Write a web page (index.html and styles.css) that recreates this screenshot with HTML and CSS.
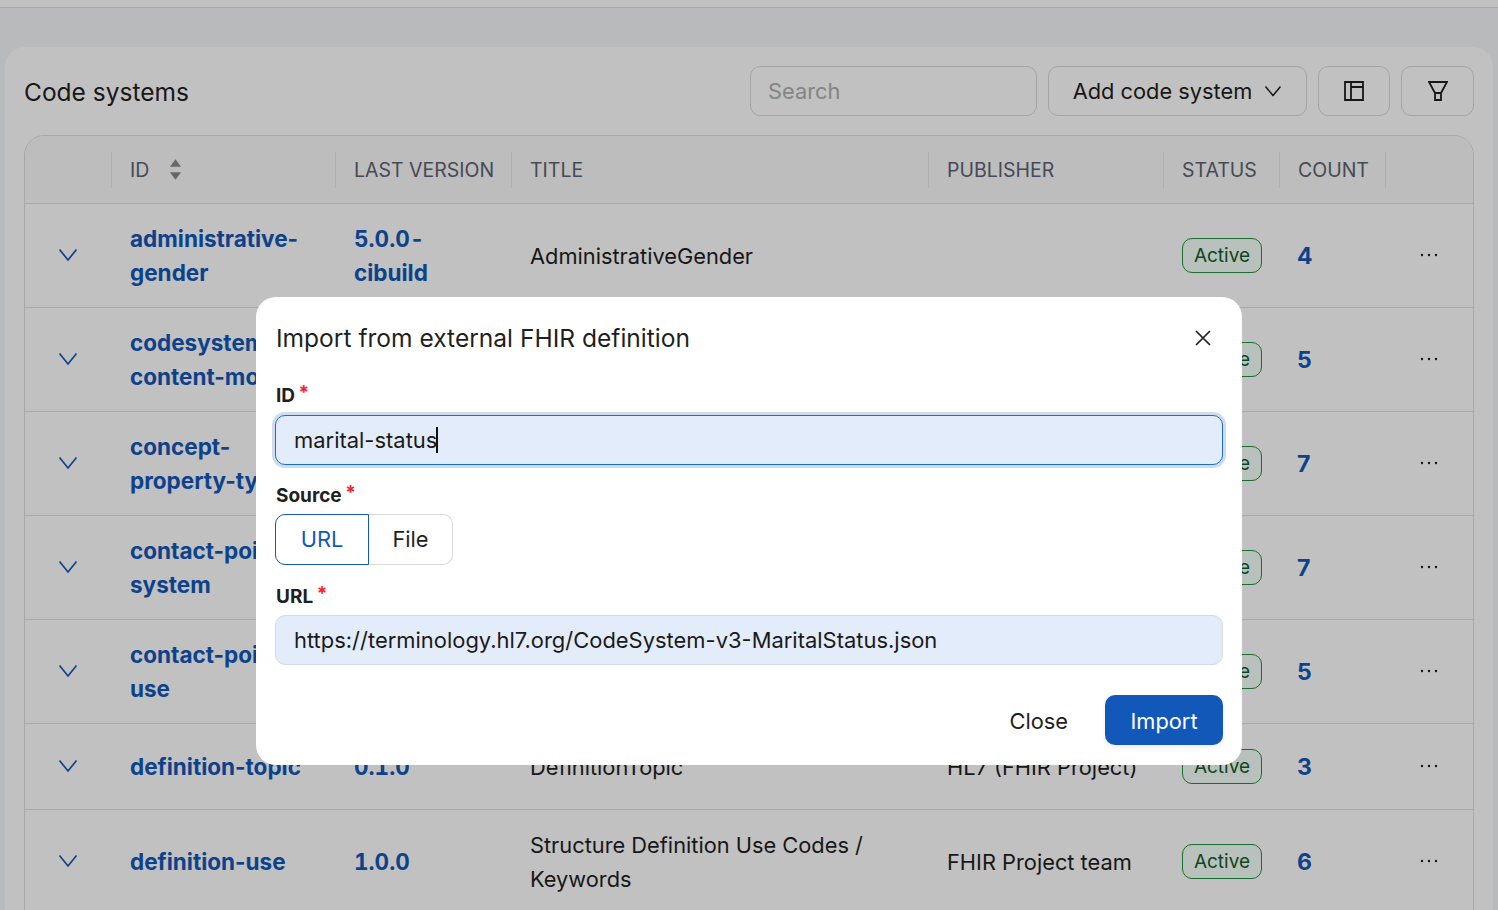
FILE: index.html
```html
<!DOCTYPE html>
<html lang="en">
<head>
    <meta charset="UTF-8">
    <meta name="viewport" content="width=device-width, initial-scale=1.0">
    <title>Code systems</title>
    <link rel="stylesheet" href="styles.css">
</head>
<body>
    <header class="topbar"></header>
    <main class="card">
        <div class="card-head">
            <h2 class="card-title">Code systems</h2>
            <div class="tools">
                <div class="search">Search</div>
                <button class="btn btn-add">Add code system
                    <svg class="ico-chev" viewBox="0 0 18 12"><path d="M1.500 1.500 9 10.500l7.500-9"/></svg>
                </button>
                <button class="btn btn-icon">
                    <svg class="ico" viewBox="0 0 20 20"><path d="M1 1h18v18H1zM7 1v18M7 6h12"/></svg>
                </button>
                <button class="btn btn-icon btn-filter">
                    <svg class="ico" viewBox="0 0 20 20"><path d="M1 1h18l-6 11H7zM7 12h6v7H7z"/></svg>
                </button>
            </div>
        </div>
        <div class="table-wrap">
            <table class="grid">
                <colgroup>
                    <col class="c-exp"><col class="c-id"><col class="c-ver"><col class="c-title"><col class="c-pub"><col class="c-status"><col class="c-count"><col class="c-act">
                </colgroup>
                <thead>
                    <tr>
                        <th></th>
                        <th><div class="th">ID
                            <svg class="ico-sort" viewBox="0 0 14 22"><path d="M7 0l6 8H1zM7 22l-6-8h12z"/></svg>
                        </div></th>
                        <th><div class="th">LAST VERSION</div></th>
                        <th><div class="th">TITLE</div></th>
                        <th><div class="th">PUBLISHER</div></th>
                        <th><div class="th">STATUS</div></th>
                        <th><div class="th">COUNT</div></th>
                        <th><div class="th"></div></th>
                    </tr>
                </thead>
                <tbody>
                    <tr>
                        <td class="exp"><svg class="ico-exp" viewBox="0 0 20 14"><path d="M1.500 1.500 10 12l8.500-10.500"/></svg></td>
                        <td><a class="lnk">administrative-gender</a></td>
                        <td><a class="lnk ver">5.0.0-cibuild</a></td>
                        <td>AdministrativeGender</td>
                        <td></td>
                        <td><span class="tag">Active</span></td>
                        <td><a class="lnk num">4</a></td>
                        <td class="act"><svg class="ico-dots" viewBox="0 0 18 4"><circle cx="2" cy="2" r="1.200"/><circle cx="9" cy="2" r="1.200"/><circle cx="16" cy="2" r="1.200"/></svg></td>
                    </tr>
                    <tr>
                        <td class="exp"><svg class="ico-exp" viewBox="0 0 20 14"><path d="M1.500 1.500 10 12l8.500-10.500"/></svg></td>
                        <td><a class="lnk">codesystem-content-mode</a></td>
                        <td><a class="lnk ver">5.0.0</a></td>
                        <td>CodeSystemContentMode</td>
                        <td>HL7 (FHIR Project)</td>
                        <td><span class="tag">Active</span></td>
                        <td><a class="lnk num">5</a></td>
                        <td class="act"><svg class="ico-dots" viewBox="0 0 18 4"><circle cx="2" cy="2" r="1.200"/><circle cx="9" cy="2" r="1.200"/><circle cx="16" cy="2" r="1.200"/></svg></td>
                    </tr>
                    <tr>
                        <td class="exp"><svg class="ico-exp" viewBox="0 0 20 14"><path d="M1.500 1.500 10 12l8.500-10.500"/></svg></td>
                        <td><a class="lnk">concept-property-type</a></td>
                        <td><a class="lnk ver">5.0.0</a></td>
                        <td>PropertyType</td>
                        <td>HL7 (FHIR Project)</td>
                        <td><span class="tag">Active</span></td>
                        <td><a class="lnk num">7</a></td>
                        <td class="act"><svg class="ico-dots" viewBox="0 0 18 4"><circle cx="2" cy="2" r="1.200"/><circle cx="9" cy="2" r="1.200"/><circle cx="16" cy="2" r="1.200"/></svg></td>
                    </tr>
                    <tr>
                        <td class="exp"><svg class="ico-exp" viewBox="0 0 20 14"><path d="M1.500 1.500 10 12l8.500-10.500"/></svg></td>
                        <td><a class="lnk">contact-point-system</a></td>
                        <td><a class="lnk ver">5.0.0</a></td>
                        <td>ContactPointSystem</td>
                        <td>HL7 (FHIR Project)</td>
                        <td><span class="tag">Active</span></td>
                        <td><a class="lnk num">7</a></td>
                        <td class="act"><svg class="ico-dots" viewBox="0 0 18 4"><circle cx="2" cy="2" r="1.200"/><circle cx="9" cy="2" r="1.200"/><circle cx="16" cy="2" r="1.200"/></svg></td>
                    </tr>
                    <tr>
                        <td class="exp"><svg class="ico-exp" viewBox="0 0 20 14"><path d="M1.500 1.500 10 12l8.500-10.500"/></svg></td>
                        <td><a class="lnk">contact-point-use</a></td>
                        <td><a class="lnk ver">5.0.0</a></td>
                        <td>ContactPointUse</td>
                        <td>HL7 (FHIR Project)</td>
                        <td><span class="tag">Active</span></td>
                        <td><a class="lnk num">5</a></td>
                        <td class="act"><svg class="ico-dots" viewBox="0 0 18 4"><circle cx="2" cy="2" r="1.200"/><circle cx="9" cy="2" r="1.200"/><circle cx="16" cy="2" r="1.200"/></svg></td>
                    </tr>
                    <tr class="row-short">
                        <td class="exp"><svg class="ico-exp" viewBox="0 0 20 14"><path d="M1.500 1.500 10 12l8.500-10.500"/></svg></td>
                        <td><a class="lnk">definition-topic</a></td>
                        <td><a class="lnk ver">0.1.0</a></td>
                        <td>DefinitionTopic</td>
                        <td>HL7 (FHIR Project)</td>
                        <td><span class="tag">Active</span></td>
                        <td><a class="lnk num">3</a></td>
                        <td class="act"><svg class="ico-dots" viewBox="0 0 18 4"><circle cx="2" cy="2" r="1.200"/><circle cx="9" cy="2" r="1.200"/><circle cx="16" cy="2" r="1.200"/></svg></td>
                    </tr>
                    <tr>
                        <td class="exp"><svg class="ico-exp" viewBox="0 0 20 14"><path d="M1.500 1.500 10 12l8.500-10.500"/></svg></td>
                        <td><a class="lnk">definition-use</a></td>
                        <td><a class="lnk ver">1.0.0</a></td>
                        <td>Structure Definition Use Codes / Keywords</td>
                        <td>FHIR Project team</td>
                        <td><span class="tag">Active</span></td>
                        <td><a class="lnk num">6</a></td>
                        <td class="act"><svg class="ico-dots" viewBox="0 0 18 4"><circle cx="2" cy="2" r="1.200"/><circle cx="9" cy="2" r="1.200"/><circle cx="16" cy="2" r="1.200"/></svg></td>
                    </tr>
                </tbody>
            </table>
        </div>
    </main>

    <div class="overlay"></div>
    <section class="modal">
        <div class="modal-head">
            <h3 class="modal-title">Import from external FHIR definition</h3>
            <svg class="ico-close" viewBox="0 0 16 16"><path d="M1 1l14 14M15 1 1 15"/></svg>
        </div>
        <label class="lbl">ID <span class="req">*</span></label>
        <div class="field field-focus">marital-status<span class="caret"></span></div>
        <label class="lbl lbl-gap">Source <span class="req">*</span></label>
        <div class="segs">
            <div class="seg seg-on">URL</div>
            <div class="seg">File</div>
        </div>
        <label class="lbl lbl-gap lbl-url">URL <span class="req">*</span></label>
        <div class="field">https://terminology.hl7.org/CodeSystem-v3-MaritalStatus.json</div>
        <div class="modal-foot">
            <button class="btn-text">Close</button>
            <button class="btn-main">Import</button>
        </div>
    </section>
</body>
</html>
```

FILE: styles.css
```css
* {
    box-sizing: border-box;
}
html, body {
    height: 100%;
}
body {
    margin: 0;
    overflow: hidden;
    background: #f5f6f8;
    color: #1f1f1f;
    font-family: Inter, "Noto Sans", sans-serif;
    font-size: 21.800px;
}
.topbar {
    height: 8px;
    background: #fff;
    border-bottom: 1px solid #dcdcdf;
}
.card {
    margin: 39px 5px 0 5px;
    padding: 19px 19px 0;
    background: #fff;
    border-radius: 20px 20px 0 0;
    height: 900px;
}
.card-head {
    display: flex;
    justify-content: space-between;
    align-items: center;
    margin-bottom: 19px;
}
.card-title {
    margin: 2px 0 0;
    font-size: 24.500px;
    font-weight: 400;
}
.tools {
    display: flex;
    gap: 11px;
}
.search {
    width: 287px;
    height: 50px;
    padding: 0 17px;
    display: flex;
    align-items: center;
    border: 1px solid #d9d9d9;
    border-radius: 10px;
    color: #b0b0b0;
}
.btn {
    height: 50px;
    display: flex;
    align-items: center;
    justify-content: center;
    background: #fff;
    border: 1px solid #d9d9d9;
    border-radius: 10px;
    color: #1f1f1f;
    font: inherit;
}
.btn-add {
    width: 259px;
    gap: 12px;
}
.btn-icon {
    width: 72px;
}
.btn-filter {
    width: 73px;
}
.ico-chev {
    width: 18px;
    height: 12px;
    fill: none;
    stroke: #1f1f1f;
    stroke-width: 1.500;
}
.ico {
    width: 20px;
    height: 20px;
    fill: none;
    stroke: #1f1f1f;
    stroke-width: 1.800;
}

.table-wrap {
    border: 1px solid #dfdfdf;
    border-radius: 20px 20px 0 0;
    overflow: hidden;
}
.grid {
    width: 1448px;
    table-layout: fixed;
    border-collapse: separate;
    border-spacing: 0;
}
.c-exp { width: 86px; }
.c-id { width: 224px; }
.c-ver { width: 176px; }
.c-title { width: 417px; }
.c-pub { width: 235px; }
.c-status { width: 116px; }
.c-count { width: 106px; }
.c-act { width: 88px; }
.grid th {
    height: 68px;
    padding: 0;
    background: #fafafa;
    border-bottom: 1px solid #dfdfdf;
    font-weight: 400;
    text-align: left;
}
.th {
    height: 36px;
    padding: 0 18px;
    display: flex;
    align-items: center;
    gap: 20px;
    border-left: 1px solid #e9e9e9;
    color: #5d6272;
    font-size: 19.500px;
    white-space: nowrap;
}
.ico-sort {
    width: 13px;
    height: 21px;
    fill: #8a8a8a;
}
.grid td {
    height: 104px;
    padding: 0 19px;
    border-bottom: 1px solid #dfdfdf;
    line-height: 34px;
    vertical-align: middle;
}
.row-short td {
    height: 86px;
}
.grid td.exp {
    padding: 0 0 0 33px;
}
.ico-exp {
    display: block;
    width: 20px;
    height: 14px;
    margin-top: -2px;
    fill: none;
    stroke: #1258b8;
    stroke-width: 1.700;
}
.lnk {
    color: #1258b8;
    font-weight: 700;
    font-size: 22.500px;
}
.ver {
    font-variant-numeric: tabular-nums;
}
.num {
    display: inline-block;
    margin-left: -1px;
    font-size: 23px;
}
.tag {
    display: block;
    width: 80px;
    height: 35px;
    border: 1px solid #23903f;
    border-radius: 10px;
    background: #f4fff8;
    color: #145c2a;
    font-size: 19px;
    line-height: 33px;
    text-align: center;
}
.grid td.act {
    padding: 0 0 0 35px;
}
.ico-dots {
    display: block;
    width: 18px;
    height: 4px;
    margin-top: -2px;
    fill: #1f1f1f;
}

.overlay {
    position: fixed;
    inset: 0;
    background: rgba(0, 0, 0, 0.243);
}
.modal {
    position: fixed;
    left: 256px;
    top: 297px;
    width: 986px;
    height: 468px;
    padding: 24px 19px 20px;
    background: #fff;
    border-radius: 20px;
}
.modal-head {
    display: flex;
    justify-content: space-between;
    align-items: center;
    height: 34px;
    margin-bottom: 28px;
}
.modal-title {
    margin: 0 0 0 1px;
    font-size: 24.550px;
    font-weight: 400;
}
.ico-close {
    width: 16px;
    height: 16px;
    margin-right: 12px;
    fill: none;
    stroke: #1f1f1f;
    stroke-width: 1.700;
}
.lbl {
    display: block;
    height: 24px;
    margin: 0 0 8px 1px;
    font-size: 19px;
    font-weight: 700;
    line-height: 25px;
}
.lbl-gap {
    margin-top: 18px;
    margin-bottom: 7px;
}
.lbl-url {
    margin-top: 19px;
}
.req {
    margin-left: -1px;
    color: #f5222d;
    font-size: 19px;
    position: relative;
    top: -3px;
}
.field {
    height: 50px;
    padding: 0 18px;
    display: flex;
    align-items: center;
    border: 1px solid #d8dadf;
    border-radius: 10px;
    background: #e3ecfb;
    color: #1a1a1a;
    font-size: 21.950px;
    width: 948px;
}
.field-focus {
    border-color: #1a6fd0;
    box-shadow: 0 0 0 3px #cfdcee;
}
.caret {
    width: 2px;
    height: 26px;
    margin-left: -1px;
    background: #111;
}
.segs {
    display: flex;
    height: 51px;
}
.seg {
    display: flex;
    align-items: center;
    justify-content: center;
    width: 84px;
    padding-bottom: 2px;
    border: 1px solid #d9d9d9;
    border-left: 0;
    border-radius: 0 10px 10px 0;
}
.seg-on {
    width: 94px;
    border: 1px solid #1258b8;
    border-radius: 10px 0 0 10px;
    color: #1258b8;
}
.modal-foot {
    display: flex;
    justify-content: flex-end;
    align-items: center;
    gap: 37px;
    margin-top: 30px;
}
.btn-text {
    padding: 2px 0 0;
    border: 0;
    background: none;
    color: #1f1f1f;
    font: inherit;
}
.btn-main {
    width: 118px;
    height: 50px;
    padding: 2px 0 0;
    border: 0;
    border-radius: 10px;
    background: #1258b8;
    color: #fff;
    font: inherit;
    box-shadow: 0 2px 4px rgba(0, 0, 0, 0.08);
}
```
